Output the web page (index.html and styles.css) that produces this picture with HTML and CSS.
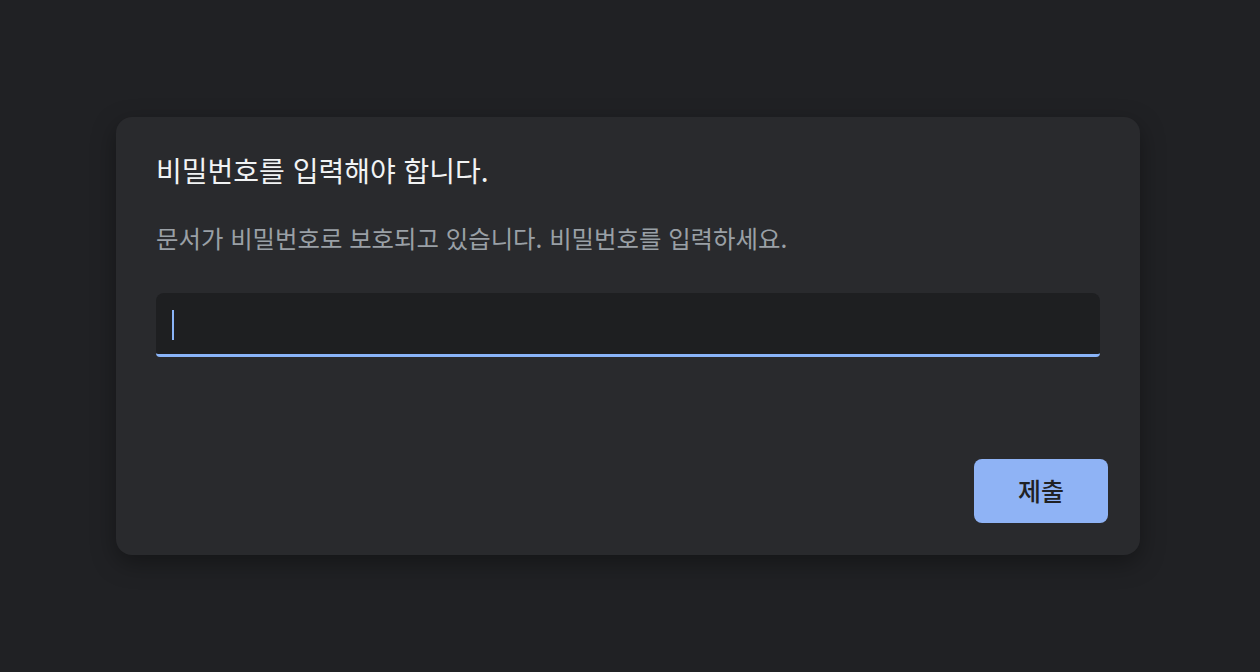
FILE: index.html
```html
<!DOCTYPE html>
<html lang="ko">
<head>
  <meta charset="UTF-8">
  <meta name="viewport" content="width=device-width, initial-scale=1.0">
  <title>비밀번호</title>
  <link rel="stylesheet" href="styles.css">
</head>
<body>
  <form class="dialog">
    <h1 class="title">비밀번호를 입력해야 합니다.</h1>
    <p class="message">문서가 비밀번호로 보호되고 있습니다. 비밀번호를 입력하세요.</p>
    <div class="field">
      <input type="password" class="password" autofocus>
      <span class="caret"></span>
    </div>
    <div class="actions">
      <button type="button" class="submit">제출</button>
    </div>
  </form>
</body>
</html>
```

FILE: styles.css
```css
html, body {
  margin: 0;
  height: 100%;
}
body {
  background: #202124;
  font-family: "Noto Sans CJK KR", "Noto Sans", sans-serif;
  display: flex;
  padding: 117px 0 0 116px;
  box-sizing: border-box;
}
.dialog {
  width: 1024px;
  height: 438px;
  box-sizing: border-box;
  background: #292a2d;
  border-radius: 16px;
  padding: 32px 32px 32px 40px;
  box-shadow: 0 8px 24px rgba(0, 0, 0, .35);
  display: flex;
  flex-direction: column;
}
.title {
  margin: 3px 0 0;
  font-size: 28px;
  font-weight: 400;
  line-height: 36px;
  color: #f1f3f4;
}
.message {
  margin: 35px 0 0;
  font-size: 24.4px;
  line-height: 30px;
  color: #9aa0a6;
}
.field {
  position: relative;
  margin: 40px 8px 0 0;
  height: 64px;
  background: #1e1f21;
  border-radius: 8px 8px 4px 4px;
  border-bottom: 3px solid #8ab4f8;
  box-sizing: border-box;
}
.password {
  width: 100%;
  height: 100%;
  box-sizing: border-box;
  border: none;
  outline: none;
  background: transparent;
  color: #e8eaed;
  padding: 0 16px;
  font-size: 20px;
  caret-color: transparent;
}
.caret {
  position: absolute;
  left: 16px;
  top: 17px;
  width: 2px;
  height: 30px;
  background: #8ab4f8;
}
.actions {
  margin-top: auto;
  display: flex;
  justify-content: flex-end;
}
.submit {
  width: 134px;
  height: 64px;
  border: none;
  border-radius: 8px;
  background: #8fb3f5;
  color: #202124;
  font-family: inherit;
  font-size: 25px;
  font-weight: 500;
  line-height: 1;
  padding: 0 0 2px;
  cursor: pointer;
}
```
